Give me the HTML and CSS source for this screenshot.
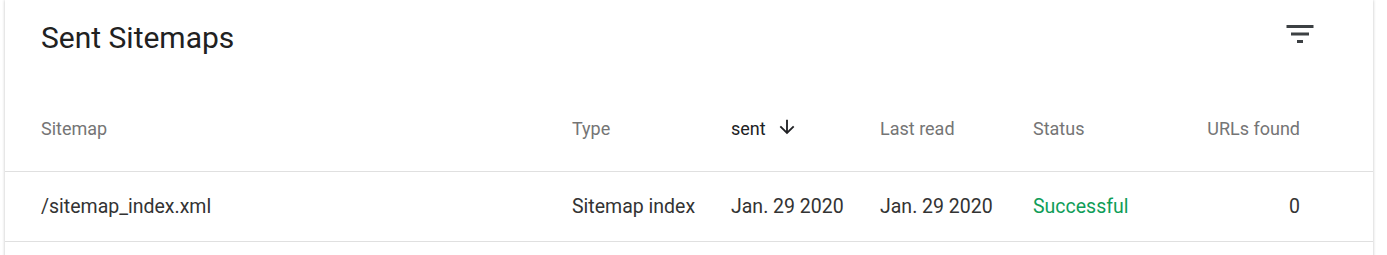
FILE: index.html
```html
<!DOCTYPE html>
<html>
<head>
<meta charset="utf-8">
<link rel="stylesheet" href="styles.css">
</head>
<body>
<div class="card">
  <div class="card-head">
    <h2 class="title">Sent Sitemaps</h2>
    <svg class="filter" viewBox="0 0 24 24" width="36" height="36"><path d="M10 18h4v-2h-4v2zM3 6v2h18V6H3zm3 7h12v-2H6v2z"/></svg>
  </div>
  <div class="row head">
    <div>Sitemap</div>
    <div>Type</div>
    <div class="sorted">sent <svg class="arrow" viewBox="0 0 24 24" width="22" height="22"><path d="M20 12l-1.41-1.41L13 16.17V4h-2v12.17l-5.58-5.59L4 12l8 8 8-8z"/></svg></div>
    <div>Last read</div>
    <div>Status</div>
    <div class="num">URLs found</div>
  </div>
  <div class="row data">
    <div>/sitemap_index.xml</div>
    <div>Sitemap index</div>
    <div>Jan. 29 2020</div>
    <div>Jan. 29 2020</div>
    <div class="ok">Successful</div>
    <div class="num">0</div>
  </div>
</div>
</body>
</html>
```

FILE: styles.css
```css
html, body {
  margin: 0;
  background: #fff;
}
body {
  font-family: Roboto, "Liberation Sans", sans-serif;
  color: #202124;
  overflow: hidden;
}
.card {
  margin-left: 5px;
  width: 1368px;
  height: 300px;
  background: #fff;
  box-shadow: 0 0 3px rgba(0, 0, 0, 0.25);
}
.card-head {
  display: flex;
  align-items: center;
  justify-content: space-between;
  height: 76px;
  padding: 0 55px 0 36px;
}
.title {
  margin: 0;
  font-size: 30px;
  font-weight: 400;
  line-height: 76px;
  color: #212121;
}
.filter {
  fill: #3c4043;
  margin-top: -8px;
}
.row {
  display: grid;
  grid-template-columns: 531px 159px 149px 153px 1fr 140px;
  padding: 0 73px 0 36px;
  line-height: 20px;
  border-bottom: 1px solid #e0e0e0;
}
.row.head {
  font-size: 18px;
  padding-top: 43px;
  padding-bottom: 32px;
  color: #757575;
}
.row.data {
  font-size: 19.5px;
  padding-top: 25px;
  padding-bottom: 24px;
  color: #333;
}
.sorted {
  color: #202124;
  display: flex;
  align-items: center;
  gap: 10px;
}
.arrow {
  fill: #202124;
  margin-top: -5px;
}
.num {
  text-align: right;
}
.ok {
  color: #0f9d58;
}
```
